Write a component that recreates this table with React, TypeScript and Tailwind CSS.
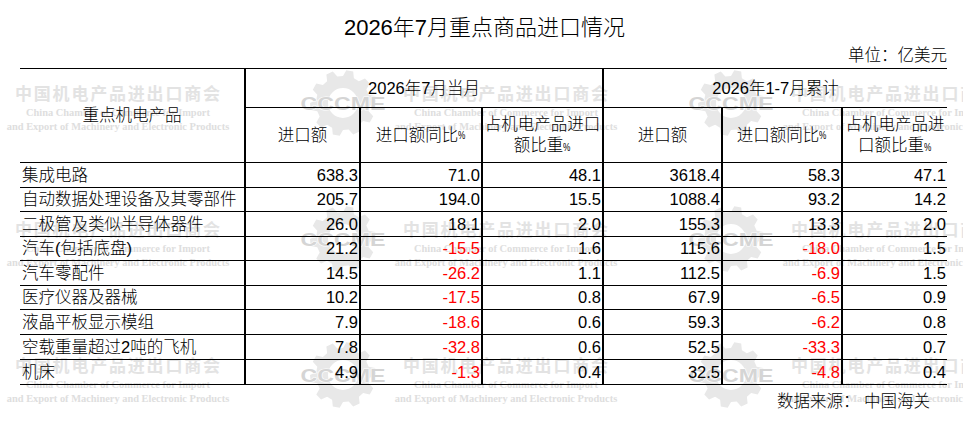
import React from "react";

const rows: string[][] = [
  ["集成电路", "638.3", "71.0", "48.1", "3618.4", "58.3", "47.1"],
  ["自动数据处理设备及其零部件", "205.7", "194.0", "15.5", "1088.4", "93.2", "14.2"],
  ["二极管及类似半导体器件", "26.0", "18.1", "2.0", "155.3", "13.3", "2.0"],
  ["汽车(包括底盘)", "21.2", "-15.5", "1.6", "115.6", "-18.0", "1.5"],
  ["汽车零配件", "14.5", "-26.2", "1.1", "112.5", "-6.9", "1.5"],
  ["医疗仪器及器械", "10.2", "-17.5", "0.8", "67.9", "-6.5", "0.9"],
  ["液晶平板显示模组", "7.9", "-18.6", "0.6", "59.3", "-6.2", "0.8"],
  ["空载重量超过2吨的飞机", "7.8", "-32.8", "0.6", "52.5", "-33.3", "0.7"],
  ["机床", "4.9", "-1.3", "0.4", "32.5", "-4.8", "0.4"],
];

const rowH = [
  "h-[25px]",
  "h-[24px]",
  "h-[25px]",
  "h-[24px]",
  "h-[25px]",
  "h-[24px]",
  "h-[25px]",
  "h-[25px]",
  "h-[25px]",
];

const colW = [
  "w-[226px]",
  "w-[115px]",
  "w-[122px]",
  "w-[121px]",
  "w-[119px]",
  "w-[120px]",
  "w-[104px]",
];

function gearPath(): string {
  const cx = 45;
  const cy = 35;
  const n = 10;
  const r1 = 27;
  const r2 = 33;
  const step = (Math.PI * 2) / n;
  const pts: string[] = [];
  for (let k = 0; k < n; k++) {
    const a = k * step - Math.PI / 2;
    const seq: [number, number][] = [
      [r1, a],
      [r2, a + step * 0.16],
      [r2, a + step * 0.5],
      [r1, a + step * 0.66],
    ];
    for (const [r, ang] of seq) {
      pts.push(`${(cx + r * Math.cos(ang)).toFixed(2)},${(cy + r * Math.sin(ang)).toFixed(2)}`);
    }
  }
  const ri = 15;
  return (
    "M" +
    pts.join(" L") +
    " Z " +
    `M${cx + ri},${cy} A${ri},${ri} 0 1,0 ${cx - ri},${cy} A${ri},${ri} 0 1,0 ${cx + ri},${cy} Z`
  );
}

const GEAR = gearPath();

function Logo() {
  return (
    <svg width="90" height="72" viewBox="0 -1 90 72">
      <path d={GEAR} fill="#e8e8e8" fillRule="evenodd" />
      <text
        x="45"
        y="42"
        textAnchor="middle"
        fontSize="19"
        fontWeight="900"
        fontFamily="Liberation Sans, sans-serif"
        fill="#d5d5d5"
        stroke="#ffffff"
        strokeWidth="1.2"
        paintOrder="stroke"
        textLength="85"
        lengthAdjust="spacingAndGlyphs"
      >
        CCCME
      </text>
    </svg>
  );
}

function Tile({ x, y }: { x: number; y: number }) {
  return (
    <div className="absolute" style={{ left: x, top: y }}>
      <div
        className="absolute left-0 top-0 whitespace-nowrap text-[17px] leading-[18px] font-bold tracking-[1.8px] text-[#e3e3e3]"
        style={{ fontFamily: '"Noto Sans CJK SC", sans-serif' }}
      >
        中国机电产品进出口商会
      </div>
      <div
        className="absolute left-[-11px] top-[22px] w-[228px] text-center whitespace-nowrap text-[10.4px] leading-[14px] font-bold text-[#dedede]"
        style={{ fontFamily: '"Liberation Serif", serif' }}
      >
        <div>China Chamber of Commerce for Import</div>
        <div>and Export of Machinery and Electronic Products</div>
      </div>
      <div className="absolute left-[283px] top-[-17px]">
        <Logo />
      </div>
    </div>
  );
}

function Watermark() {
  const xs = [15, 403, 791];
  const ys = [84, 220, 356];
  return (
    <div className="absolute inset-0 overflow-hidden pointer-events-none">
      {ys.map((y) => xs.map((x) => <Tile key={`${x}-${y}`} x={x} y={y} />))}
    </div>
  );
}

function Pct() {
  return <span className="inline-block text-[11px] leading-none scale-x-75 origin-left -mr-[2px]">%</span>;
}

export default function App() {
  return (
    <div
      className="relative w-[963px] h-[424px] bg-white text-black overflow-hidden font-light"
      style={{ fontFamily: '"Liberation Sans", "Noto Sans CJK SC", sans-serif' }}
    >
      <Watermark />
      <div className="relative">
        <div className="h-[43px] flex items-end justify-center pl-[6px] text-[22px] leading-[30px]">
          2026年7月重点商品进口情况
        </div>
        <div className="h-[25px] flex items-center justify-end pr-[16px] text-[16.5px] leading-[25px]">
          单位：亿美元
        </div>

        <div className="ml-[20px] w-[927px] border-t border-black text-[16.5px]">
          {/* header */}
          <div className="flex h-[94px] border-b border-black">
            <div className="w-[226px] border-r-2 border-black flex items-center justify-center">
              重点机电产品
            </div>
            <div className="w-[358px] border-r-2 border-black flex flex-col">
              <div className="h-[39px] border-b border-black flex items-center justify-center">
                2026年7月当月
              </div>
              <div className="flex flex-1">
                <div className="w-[115px] border-r-2 border-black flex items-center justify-center">
                  进口额
                </div>
                <div className="w-[122px] border-r-2 border-black flex items-center justify-center">
                  进口额同比<Pct />
                </div>
                <div className="flex-1 flex items-center justify-center text-center leading-[21px]">
                  <div>
                    占机电产品进口
                    <br />
                    额比重<Pct />
                  </div>
                </div>
              </div>
            </div>
            <div className="flex-1 flex flex-col">
              <div className="h-[39px] border-b border-black flex items-center justify-center">
                2026年1-7月累计
              </div>
              <div className="flex flex-1">
                <div className="w-[119px] border-r-2 border-black flex items-center justify-center">
                  进口额
                </div>
                <div className="w-[120px] border-r-2 border-black flex items-center justify-center">
                  进口额同比<Pct />
                </div>
                <div className="flex-1 flex items-center justify-center text-center leading-[21px]">
                  <div>
                    占机电产品进
                    <br />
                    口额比重<Pct />
                  </div>
                </div>
              </div>
            </div>
          </div>

          {/* body */}
          {rows.map((r, i) => (
            <div key={i} className={`flex border-b border-black ${rowH[i]}`}>
              {r.map((c, j) => {
                const neg = c.startsWith("-");
                const last = j === r.length - 1;
                return (
                  <div
                    key={j}
                    className={`${colW[j]} ${last ? "" : "border-r-2 border-black"} flex items-center ${
                      j === 0 ? "justify-start pl-[2px]" : "justify-end pr-[1px]"
                    } ${neg ? "text-[#ff0000]" : ""} whitespace-nowrap leading-none`}
                  >
                    {c}
                  </div>
                );
              })}
            </div>
          ))}
        </div>

        <div className="h-[32px] flex items-center justify-end pr-[33px] text-[16.5px] leading-[32px]">
          数据来源： 中国海关
        </div>
      </div>
    </div>
  );
}
